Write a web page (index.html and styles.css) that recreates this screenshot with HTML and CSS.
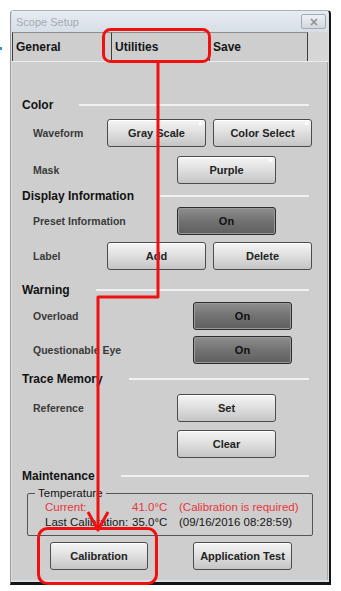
FILE: index.html
```html
<!DOCTYPE html>
<html lang="en">
  <head>
    <meta charset="UTF-8" />
    <meta name="viewport" content="width=device-width, initial-scale=1.0" />
    <title>Scope Setup</title>
    <link rel="stylesheet" href="styles.css">
  </head>
  <body>
    <div class="window">
      <div class="titlebar">
        <span class="title">Scope Setup</span>
        <span class="close">
          <svg width="10" height="8" viewBox="0 0 10 8"><path d="M2 1 L8 7 M8 1 L2 7" stroke="#8c9096" stroke-width="1.6" /></svg>
        </span>
      </div>

      <div class="tabs">
        <div class="tab">General</div>
        <div class="tab">Utilities</div>
        <div class="tab last">Save</div>
        <div class="tab-rest"></div>
      </div>

      <div class="panel">
        <div class="heading mt-36"><span>Color</span><i class="rule"></i></div>
        <div class="row pair mt-7">
          <span class="label">Waveform</span>
          <button class="btn marked">Gray Scale</button>
          <button class="btn marked">Color Select</button>
        </div>
        <div class="row mid mt-9">
          <span class="label">Mask</span>
          <button class="btn marked">Purple</button>
        </div>

        <div class="heading mt-5"><span>Display Information</span><i class="rule"></i></div>
        <div class="row mid mt-4">
          <span class="label">Preset Information</span>
          <button class="btn on">On</button>
        </div>
        <div class="row pair mt-7">
          <span class="label">Label</span>
          <button class="btn">Add</button>
          <button class="btn">Delete</button>
        </div>

        <div class="heading mt-13"><span>Warning</span><i class="rule"></i></div>
        <div class="row wide mt-5">
          <span class="label">Overload</span>
          <button class="btn on">On</button>
        </div>
        <div class="row wide mt-6">
          <span class="label">Questionable Eye</span>
          <button class="btn on">On</button>
        </div>

        <div class="heading mt-8"><span>Trace Memory</span><i class="rule"></i></div>
        <div class="row mid mt-8">
          <span class="label">Reference</span>
          <button class="btn">Set</button>
        </div>
        <div class="row mid mt-8">
          <span class="label"></span>
          <button class="btn">Clear</button>
        </div>

        <div class="heading mt-11"><span>Maintenance</span><i class="rule"></i></div>
        <fieldset class="temp">
          <legend>Temperature</legend>
          <div class="temp-row warn">
            <span>Current:</span><span>41.0°C</span><span>(Calibration is required)</span>
          </div>
          <div class="temp-row">
            <span>Last Calibration:</span><span>35.0°C</span><span>(09/16/2016 08:28:59)</span>
          </div>
        </fieldset>
        <div class="row actions">
          <button class="btn">Calibration</button>
          <button class="btn">Application Test</button>
        </div>
      </div>
    </div>

    <!-- red callouts drawn over the screenshot -->
    <svg class="marks" width="341" height="591" viewBox="0 0 341 591">
      <rect x="0" y="47" width="2" height="3" fill="#3b8fd8" />
      <g fill="none" stroke="#f01010" stroke-width="3" stroke-linejoin="round">
        <rect x="103.5" y="29.5" width="106" height="32" rx="7" />
        <path d="M158 62 V297 H98 V528" />
        <path d="M88 512 L98 530 L108 512" />
        <rect x="38.5" y="528.5" width="118" height="55" rx="9" />
      </g>
    </svg>
  </body>
</html>
```

FILE: styles.css
```css
body {
  margin: 0;
  background: #fff;
  font-family: "Liberation Sans", Arial, sans-serif;
  color: #111;
}

.window {
  margin: 10px 0 0 10px;
  width: 321px;
  height: 575px;
  box-sizing: border-box;
  border-top: 1px solid #a9b1ba;
  border-left: 1px solid #9a9a9a;
  border-right: 2px solid #161616;
  border-bottom: 3px solid #161616;
  border-radius: 4px 4px 0 0;
  background: #d9dfe5;
  padding: 0 1px 2px 1px;
  display: flex;
  flex-direction: column;
}

.titlebar {
  height: 21px;
  display: flex;
  align-items: center;
  justify-content: space-between;
  background: linear-gradient(#e6ecf2, #d7dee6);
  padding: 0 2px 0 4px;
}

.title {
  font-size: 11px;
  color: #a3abb3;
}

.close {
  width: 23px;
  height: 13px;
  border: 1px solid #a2aab2;
  border-radius: 2px;
  background: linear-gradient(#eef1f4, #d2d8de);
  display: flex;
  align-items: center;
  justify-content: center;
}

.tabs {
  height: 29px;
  display: flex;
  background: #d6d6d6;
  border-bottom: 1px solid #ececec;
}

.tab {
  width: 98px;
  box-sizing: border-box;
  border-top: 1px solid #8e8e8e;
  border-left: 1px solid #3e3e3e;
  background: #cecece;
  padding-left: 3px;
  display: flex;
  align-items: center;
  font-size: 12px;
  font-weight: bold;
  color: #151515;
}

.tab:first-child {
  width: 99px;
}

.tab.last {
  border-right: 1px solid #3e3e3e;
  width: 99px;
}

.tab-rest {
  flex: 1;
}

.panel {
  flex: 1;
  background: #cecece;
  border-right: 1px solid #a8a8a8;
}

.heading {
  height: 14px;
  display: flex;
  align-items: center;
  padding: 0 18px 0 10px;
  font-size: 12px;
  font-weight: bold;
  color: #121212;
}

.rule {
  flex: 1;
  height: 2px;
  margin-left: 26px;
  background: #f1f1f1;
}

.row {
  height: 28px;
  display: flex;
  align-items: center;
  padding-left: 21px;
}

.label {
  font-size: 10.5px;
  font-weight: bold;
  color: #3a3a3a;
}

.pair .label { width: 74px; }
.mid .label { width: 144px; }
.wide .label { width: 160px; }

.pair .btn + .btn {
  margin-left: 7px;
}

.btn {
  position: relative;
  width: 99px;
  height: 28px;
  box-sizing: border-box;
  padding: 0;
  border: 1px solid #4c4c4c;
  border-radius: 3px;
  background: linear-gradient(#f5f5f5, #dedede 50%, #c5c5c5);
  box-shadow: inset 0 1px 0 #fff;
  font-family: "Liberation Sans", Arial, sans-serif;
  font-size: 11px;
  font-weight: bold;
  color: #232323;
}

.btn.on {
  border-color: #2c2c2c;
  background: linear-gradient(#8e8e8e, #727272 50%, #5f5f5f);
  box-shadow: inset 0 0 0 1px #9a9a9a;
  color: #101010;
}

.btn.marked::after {
  content: "";
  position: absolute;
  top: 2px;
  right: 3px;
  width: 3px;
  height: 3px;
  background: #fff;
}

.mt-4 { margin-top: 4px; }
.mt-5 { margin-top: 5px; }
.mt-6 { margin-top: 6px; }
.mt-7 { margin-top: 7px; }
.mt-8 { margin-top: 8px; }
.mt-9 { margin-top: 9px; }
.mt-11 { margin-top: 11px; }
.mt-13 { margin-top: 13px; }
.mt-36 { margin-top: 36px; }

.temp {
  margin: 4px 14px 0 15px;
  padding: 0 0 6px 17px;
  border: 1px solid #555;
  border-radius: 2px;
}

.temp legend {
  margin-left: -10px;
  padding: 0 3px;
  font-size: 11.5px;
  color: #111;
}

.temp-row {
  display: grid;
  grid-template-columns: 87px 47px auto;
  height: 15px;
  align-items: center;
  font-size: 11.5px;
  color: #151515;
}

.temp-row.warn {
  color: #e8363a;
}

.actions {
  margin-top: 6px;
  padding-left: 38px;
}

.actions .btn {
  width: 98px;
}

.actions .btn + .btn {
  margin-left: 45px;
  width: 99px;
}

.marks {
  position: absolute;
  top: 0;
  left: 0;
  pointer-events: none;
}
```
